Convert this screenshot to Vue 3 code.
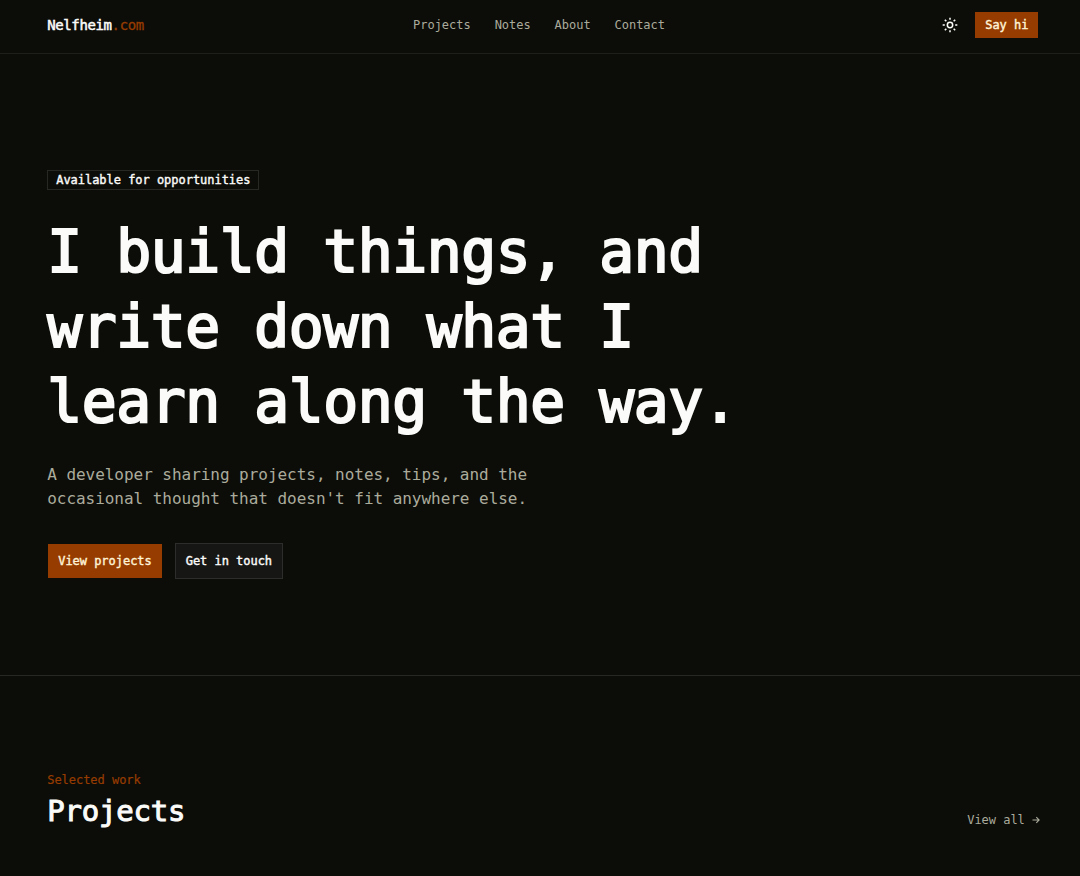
<script setup>
const links = ['Projects', 'Notes', 'About', 'Contact']
const rays = [0, 45, 90, 135, 180, 225, 270, 315]
</script>

<template>
  <div class="page">
    <header class="topbar">
      <div class="logo">Nelfheim<span>.com</span></div>
      <nav class="nav"><a v-for="l in links" :key="l">{{ l }}</a></nav>
      <div class="actions">
        <button class="theme" aria-label="Toggle theme">
          <svg width="16" height="16" viewBox="0 0 24 24" fill="none" stroke="currentColor" stroke-width="2.3">
            <circle cx="12" cy="12" r="4" />
            <path v-for="r in rays" :key="r" d="M12 1v3.2" :transform="`rotate(${r} 12 12)`" />
          </svg>
        </button>
        <button class="btn primary small">Say hi</button>
      </div>
    </header>

    <section class="hero">
      <div class="badge">Available for opportunities</div>
      <h1>I build things, and<br />write down what I<br />learn along the way.</h1>
      <p>A developer sharing projects, notes, tips, and the<br />occasional thought that doesn't fit anywhere else.</p>
      <div class="cta">
        <button class="btn primary">View projects</button>
        <button class="btn outline">Get in touch</button>
      </div>
    </section>

    <section class="work">
      <div>
        <div class="eyebrow">Selected work</div>
        <h2>Projects</h2>
      </div>
      <a class="all">View all <svg width="8" height="8" viewBox="0 0 8 8" fill="none" stroke="currentColor" stroke-width="1.1"><path d="M.5 4H7M4.3 1.2 7.1 4 4.3 6.8" /></svg></a>
    </section>
  </div>
</template>

<style>
body {
  background: #0c0d09;
}
</style>

<style scoped>
.page {
  box-sizing: border-box;
  height: 876px;
  overflow: hidden;
  background: #0c0d09;
  color: #fbfbf9;
  font: 12px/16px "DejaVu Sans Mono", "Liberation Mono", monospace;
  letter-spacing: -0.03px;
}
.topbar {
  box-sizing: border-box;
  height: 54px;
  padding: 0 40.6px 3px 47.2px;
  display: flex;
  align-items: center;
  justify-content: space-between;
  border-bottom: 1px solid #1e1f1b;
}
.logo {
  font-size: 14px;
  line-height: 20px;
  letter-spacing: -0.378px;
  -webkit-text-stroke: 0.5px currentColor;
}
.logo span {
  color: #973c00;
  -webkit-text-stroke-width: 0.3px;
}
.nav {
  display: flex;
  gap: 24px;
  color: #abab9c;
}
.actions {
  display: flex;
  align-items: center;
  gap: 8px;
}
button {
  font: inherit;
  letter-spacing: inherit;
  margin: 0;
}
.theme {
  width: 32px;
  height: 32px;
  padding: 0;
  border: 0;
  background: none;
  color: #fbfbf9;
  display: flex;
  align-items: center;
  justify-content: center;
}
.btn {
  box-sizing: border-box;
  height: 36px;
  padding: 0 10px;
  border: 1px solid transparent;
  background-clip: padding-box;
  color: #fbfbf9;
  white-space: nowrap;
  -webkit-text-stroke: 0.4px currentColor;
}
.btn.small {
  height: 28px;
}
.primary {
  background-color: #973c00;
  color: #fef3d6;
}
.outline {
  background-color: #161615;
  border-color: #2d2d2b;
}
.hero {
  box-sizing: border-box;
  height: 622px;
  padding: 116px 40px 0 47.2px;
  border-bottom: 1px solid #272823;
}
.badge {
  box-sizing: border-box;
  width: 212px;
  height: 20px;
  padding: 1px 0 1px 8px;
  white-space: nowrap;
  border: 1px solid #272823;
  -webkit-text-stroke: 0.4px currentColor;
}
h1 {
  margin: 25px 0 0;
  font-size: 58px;
  line-height: 75px;
  font-weight: 400;
  letter-spacing: -0.42px;
  -webkit-text-stroke: 2.2px currentColor;
}
.hero p {
  margin: 23px 0 0;
  font-size: 16px;
  line-height: 24px;
  letter-spacing: -0.036px;
  color: #abab9c;
}
.cta {
  margin-top: 32px;
  display: flex;
  gap: 12px;
}
.work {
  padding: 96px 40px 0 47.2px;
  display: flex;
  justify-content: space-between;
  align-items: flex-end;
}
.eyebrow {
  color: #973c00;
  -webkit-text-stroke: 0.2px currentColor;
}
h2 {
  margin: 5px 0 -1px;
  font-size: 29px;
  line-height: 36px;
  font-weight: 400;
  letter-spacing: -0.21px;
  -webkit-text-stroke: 1px currentColor;
}
.all {
  color: #abab9c;
}
</style>
